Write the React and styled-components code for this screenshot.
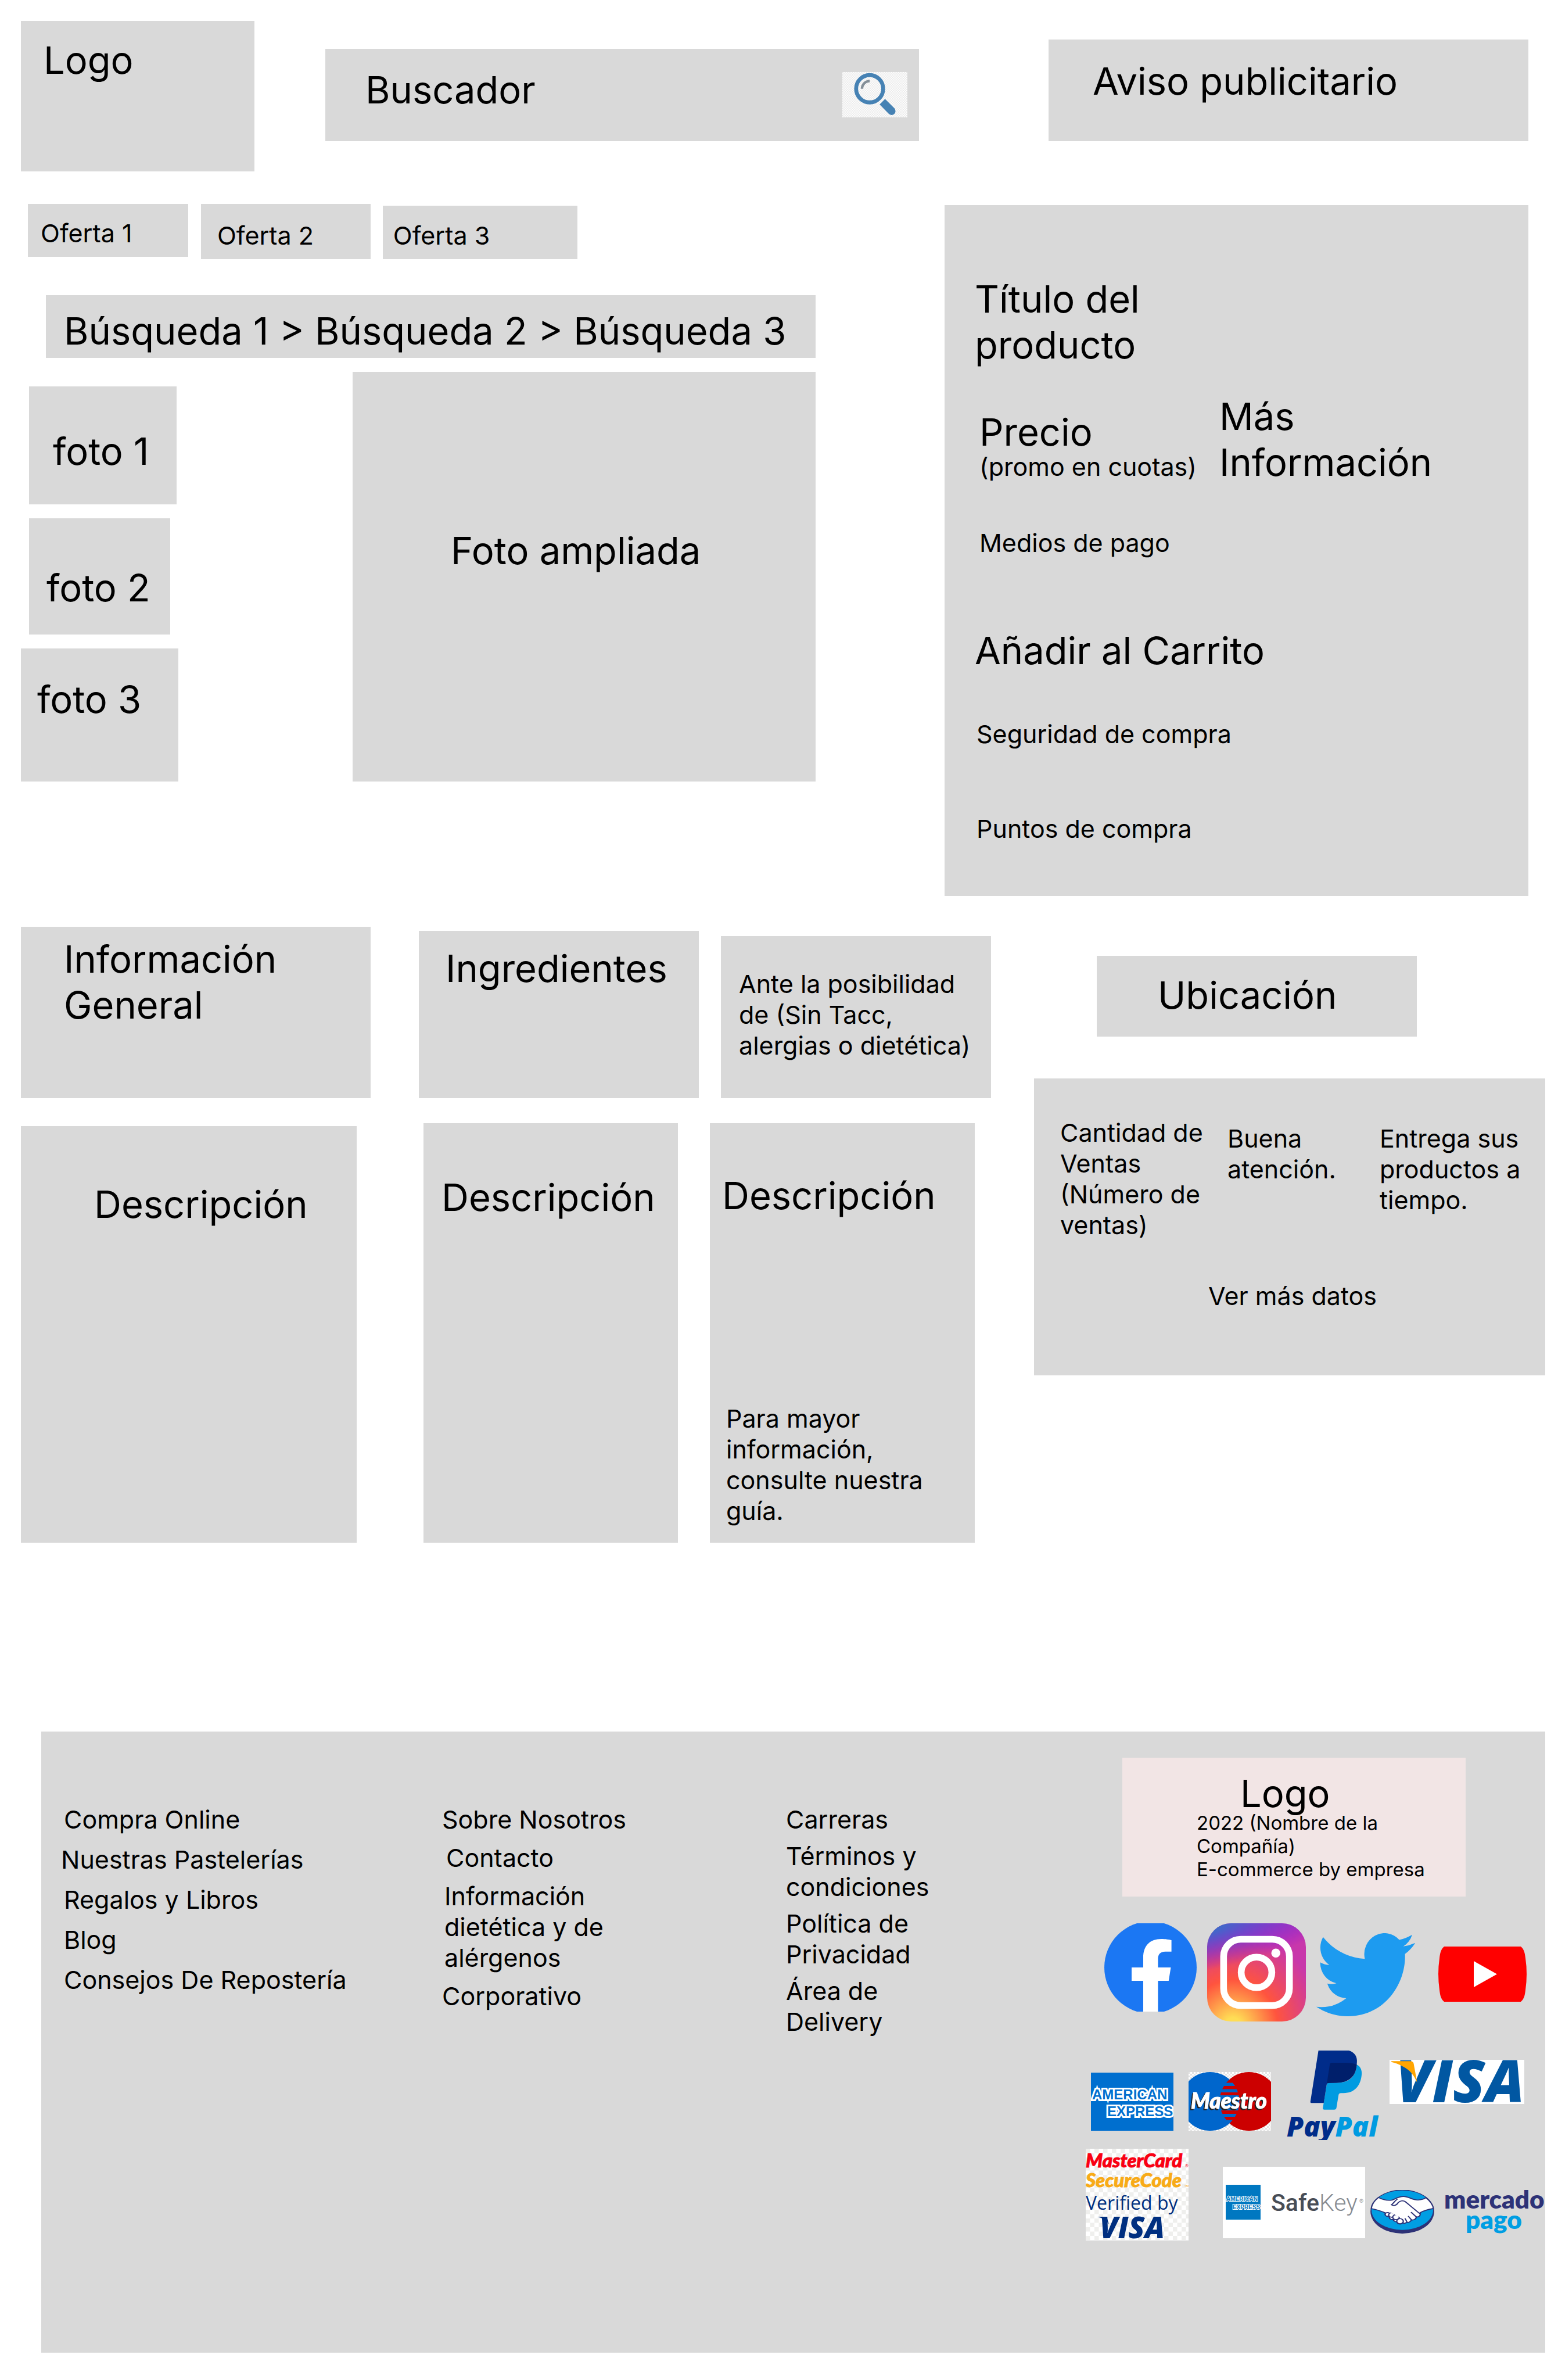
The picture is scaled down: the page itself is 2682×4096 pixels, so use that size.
import React from "react";
import styled, { createGlobalStyle } from "styled-components";

const GlobalStyle = createGlobalStyle`
  *, *::before, *::after { box-sizing: border-box; }
  body {
    margin: 0;
    background: #fff;
    color: #000;
    font-family: Inter, "Liberation Sans", sans-serif;
    font-optical-sizing: none;
  }
  h1, h2, p, ul { margin: 0; padding: 0; font-weight: 400; }
  ul { list-style: none; }
  a { color: inherit; text-decoration: none; }
  button, input { font: inherit; color: inherit; background: none; border: 0; padding: 0; margin: 0; border-radius: 0; }
  button { text-align: left; cursor: pointer; }
  svg { display: block; }
`;

/* ---------- text ---------- */

const Large = styled.p`
  font-size: 65px;
  line-height: ${(p) => p.$leading || 79}px;
`;

const Body = styled.p`
  font-size: 43px;
  line-height: 53px;
`;

const Small = styled.p`
  font-size: 33px;
  line-height: 40px;
`;

/* ---------- building blocks ---------- */

const Page = styled.div`
  padding: 36px 22px 47px 36px;
`;

const Row = styled.div`
  display: grid;
  grid-template-columns: ${(p) => p.$cols};
  align-items: ${(p) => p.$align || "start"};
`;

const Panel = styled.div`
  min-width: 0;
  min-height: ${(p) => p.$h}px;
  margin-top: ${(p) => p.$top || 0}px;
  margin-left: ${(p) => p.$gap || 0}px;
  padding: ${(p) => p.$pad || "0"};
  background: #d9d9d9;
`;

/* ---------- header ---------- */

const Header = styled(Row)`
  padding-right: 29px;
`;

const SearchForm = styled(Panel)`
  display: flex;
  align-items: flex-start;
`;

const SearchInput = styled.input`
  flex: 1;
  min-width: 0;
  height: 79px;
  margin-top: 31px;
  padding-left: 69px;
  font-size: 65px;
  line-height: 79px;
  outline: 0;
  &::placeholder { color: #000; opacity: 1; }
`;

const SearchButton = styled.button`
  width: 112px;
  height: 78px;
  margin: 40px 20px 0 0;
`;

/* ---------- product ---------- */

const Main = styled.main`
  margin-top: 56px;
`;

const ProductRow = styled(Row)`
  padding-right: 29px;
`;

const Browse = styled.div`
  min-width: 0;
`;

const Offers = styled(Row)`
  padding: 0 30% 0 12px;
`;

const Breadcrumb = styled.nav`
  margin: 62px 0 0 43px;
  min-height: 108px;
  padding: 22px 0 0 31px;
  background: #d9d9d9;
  font-size: 65px;
  line-height: 79px;
  white-space: nowrap;
`;

const Gallery = styled(Row)`
  margin-top: 24px;
`;

const Thumbs = styled.div`
  min-width: 0;
  display: flex;
  flex-direction: column;
  gap: 24px;
  padding-top: 25px;
`;

const Thumb = styled.button`
  display: flex;
  align-items: flex-start;
  min-height: ${(p) => p.$h}px;
  margin: ${(p) => p.$inset || "0"};
  padding: ${(p) => p.$pad};
  background: #d9d9d9;
  font-size: 65px;
  line-height: 79px;
  white-space: nowrap;
`;

const ProductTitle = styled.h1`
  max-width: 400px;
  font-size: 65px;
  line-height: 79px;
`;

const PriceRow = styled(Row)`
  margin-top: 44px;
  padding-left: 8px;
`;

const Price = styled.div`
  padding-top: 33px;
  white-space: nowrap;
`;

const MoreInfo = styled(Large)`
  max-width: 400px;
`;

const Payments = styled(Body)`
  margin-top: 73px;
  padding-left: 8px;
`;

const CartButton = styled.button`
  display: block;
  margin-top: 119px;
  font-size: 65px;
  line-height: 79px;
`;

const Benefit = styled(Body)`
  margin-top: ${(p) => p.$top}px;
  padding-left: 3px;
`;

/* ---------- details ---------- */

const Details = styled(Row)`
  margin-top: 53px;
`;

const Info = styled.section`
  min-width: 0;
`;

const Descriptions = styled(Row)`
  margin-top: 43px;
  padding-right: 28px;
`;

const Guide = styled(Body)`
  margin-top: 318px;
  padding-left: 7px;
  max-width: 400px;
`;

const Seller = styled.section`
  min-width: 0;
  margin-left: 74px;
  padding-top: 50px;
`;

const Location = styled.div`
  min-height: 139px;
  margin: 0 221px 0 108px;
  padding: 28px 0 0 105px;
  background: #d9d9d9;
`;

const SellerStats = styled.div`
  min-height: 511px;
  margin-top: 72px;
  padding: 67px 0 0 45px;
  background: #d9d9d9;
`;

const Stat = styled(Body)`
  padding-top: ${(p) => (p.$lower ? 10 : 0)}px;
`;

const MoreData = styled.a`
  display: block;
  margin-top: 69px;
  padding-left: 255px;
  font-size: 43px;
  line-height: 53px;
`;

/* ---------- footer ---------- */

const Footer = styled.footer`
  display: grid;
  grid-template-columns: 651fr 592fr 516fr 791fr;
  align-items: start;
  min-height: 1069px;
  margin: 325px 0 0 35px;
  padding-left: 39px;
  background: #d9d9d9;
`;

const LinkColumn = styled.ul`
  min-width: 0;
  display: flex;
  flex-direction: column;
  gap: ${(p) => p.$gap}px;
  padding-top: 125px;
  font-size: 43px;
  line-height: 53px;
`;

const LinkItem = styled.li`
  max-width: ${(p) => p.$max || "none"};
  padding-left: ${(p) => p.$indent || 0}px;
  margin-left: ${(p) => (p.$outdent ? -5 : 0)}px;
`;

const Brand = styled.div`
  min-width: 0;
  padding-top: 45px;
`;

const Company = styled.div`
  min-height: 239px;
  margin: 0 137px 0 63px;
  padding: 31px 60px 0 128px;
  background: #f2e5e5;
`;

const CompanyLogo = styled(Large)`
  padding-left: 75px;
`;

const LogoRow = styled.div`
  display: flex;
  align-items: flex-start;
  margin-top: ${(p) => p.$top}px;
  padding-left: ${(p) => p.$left || 0}px;
`;

const LogoSlot = styled.a`
  display: block;
  flex: none;
  margin: ${(p) => p.$top || 0}px 0 0 ${(p) => p.$gap || 0}px;
`;

/* ---------- drawings ---------- */

const SearchIcon = () => (
  <svg width="112" height="78" viewBox="0 0 495 342" preserveAspectRatio="none" aria-hidden="true">
    <defs>
      <pattern id="searchCheck" width="18" height="18" patternUnits="userSpaceOnUse">
        <rect width="18" height="18" fill="#fff" />
        <rect width="9" height="9" fill="#e9e9e9" />
        <rect x="9" y="9" width="9" height="9" fill="#e9e9e9" />
      </pattern>
    </defs>
    <rect width="495" height="342" fill="url(#searchCheck)" />
    <circle cx="208" cy="126" r="103" fill="none" stroke="#4682b4" strokeWidth="30" />
    <path d="M150 126A58 58 0 0 1 208 68" fill="none" stroke="#848f98" strokeWidth="19" />
    <path d="M284 244L325 203L396 273A30 30 0 0 1 353 315Z" fill="#4682b4" />
  </svg>
);

const FacebookLogo = () => (
  <svg width="159" height="152" viewBox="0 0 159 152" aria-hidden="true">
    <circle cx="79.5" cy="76" r="79.5" fill="#1b77f3" />
    <path
      fill="#fff"
      d="M67 152V99H47V76H67V59C67 38 79 27 98 27C105 27 112 28 115.6 29V48.7H105C96 48.7 92.4 54 92.4 61V76H114.5L110.8 99H92.4V152Z"
    />
  </svg>
);

const InstagramLogo = () => (
  <svg width="170" height="169" viewBox="0 0 132 132" preserveAspectRatio="none" aria-hidden="true">
    <defs>
      <radialGradient id="igWarm" gradientUnits="userSpaceOnUse" cx="158.429" cy="578.088" r="65" gradientTransform="matrix(0 -1.98198 1.8439 0 -1031.402 454.004)">
        <stop offset="0" stopColor="#fd5" />
        <stop offset=".1" stopColor="#fd5" />
        <stop offset=".5" stopColor="#ff543e" />
        <stop offset="1" stopColor="#c837ab" />
      </radialGradient>
      <radialGradient id="igCool" gradientUnits="userSpaceOnUse" cx="147.694" cy="473.455" r="65" gradientTransform="matrix(.17394 .86872 -3.5818 .71718 1648.348 -458.493)">
        <stop offset="0" stopColor="#3771c8" />
        <stop offset=".128" stopColor="#3771c8" />
        <stop offset="1" stopColor="#60f" stopOpacity="0" />
      </radialGradient>
    </defs>
    <rect width="132" height="132" rx="32" fill="url(#igWarm)" />
    <rect width="132" height="132" rx="32" fill="url(#igCool)" />
    <g fill="none" stroke="#fff" strokeWidth="9">
      <rect x="22" y="21.5" width="88" height="89" rx="23" />
      <circle cx="66" cy="66" r="20.5" />
    </g>
    <circle cx="91.8" cy="40" r="6" fill="#fff" />
  </svg>
);

const TwitterLogo = () => (
  <svg width="170" height="143" viewBox="0 2.25 24 19.5" preserveAspectRatio="none" aria-hidden="true">
    <path
      fill="#1d9bf0"
      d="M23.953 4.57a10 10 0 01-2.825.775 4.958 4.958 0 002.163-2.723c-.951.555-2.005.959-3.127 1.184a4.92 4.92 0 00-8.384 4.482C7.69 8.095 4.067 6.13 1.64 3.162a4.822 4.822 0 00-.666 2.475c0 1.71.87 3.213 2.188 4.096a4.904 4.904 0 01-2.228-.616v.06a4.923 4.923 0 003.946 4.827 4.996 4.996 0 01-2.212.085 4.936 4.936 0 004.604 3.417 9.867 9.867 0 01-6.102 2.105c-.39 0-.779-.023-1.17-.067a13.995 13.995 0 007.557 2.209c9.053 0 13.998-7.496 13.998-13.985 0-.21 0-.42-.015-.63A9.935 9.935 0 0024 4.59z"
    />
  </svg>
);

const YoutubeLogo = () => (
  <svg width="152" height="95" viewBox="0 0 152 95" aria-hidden="true">
    <path fill="#f00" d="M10 0H142C148 5 149 12 150 20Q154 47 150 75C149 83 148 90 142 95H10C4 90 3 83 2 75Q-2 47 2 20C3 12 4 5 10 0Z" />
    <path fill="#fff" d="M61 25L101 47.5L61 70Z" />
  </svg>
);

const LogoText = styled.text`
  font-family: ${(p) => p.$family || "Open Sans"}, sans-serif;
  font-size: ${(p) => p.$size}px;
  font-weight: ${(p) => p.$weight || 400};
  font-style: ${(p) => (p.$italic ? "italic" : "normal")};
  filter: ${(p) => (p.$shadow ? "drop-shadow(-2px 2px 0 #222)" : "none")};
`;

const AmexLogo = () => (
  <svg width="142" height="100" viewBox="0 0 142 100" aria-hidden="true">
    <rect width="142" height="100" fill="#006fcf" />
    <g fill="#006fcf" stroke="#fff" strokeWidth="6" paintOrder="stroke">
      <LogoText $family="Liberation Sans" $size={24} $weight={700} x="2" y="46">AMERICAN</LogoText>
      <LogoText $family="Liberation Sans" $size={24} $weight={700} x="28" y="75">EXPRESS</LogoText>
    </g>
  </svg>
);

const MaestroLogo = () => (
  <svg width="142" height="101" viewBox="0 0 142 101" aria-hidden="true">
    <defs>
      <pattern id="maestroCheck" width="6" height="6" patternUnits="userSpaceOnUse">
        <rect width="6" height="6" fill="#fff" />
        <rect width="3" height="3" fill="#e4e4e4" />
        <rect x="3" y="3" width="3" height="3" fill="#e4e4e4" />
      </pattern>
      <clipPath id="maestroBands">
        <path d="M0 13H142V18.5H0ZM0 24H142V29.5H0ZM0 35H142V40H0ZM0 66H142V72H0ZM0 77H142V82.5H0Z" />
      </clipPath>
    </defs>
    <rect width="142" height="101" fill="url(#maestroCheck)" />
    <circle cx="104" cy="50.5" r="50.5" fill="#c00" />
    <circle cx="37" cy="50.5" r="50.5" fill="#06c" />
    <circle cx="104" cy="50.5" r="50.5" fill="#c00" clipPath="url(#maestroBands)" />
    <LogoText $family="Lato" $size={37} $weight={900} $italic $shadow x="4" y="63" fill="#fff" stroke="#fff" strokeWidth="1">Maestro</LogoText>
  </svg>
);

const PaypalLogo = () => (
  <svg width="161" height="154" viewBox="0 0 161 154" aria-hidden="true">
    <svg width="161" height="154" viewBox="85 120 510 636" preserveAspectRatio="none">
      <path fill="#009be1" d="M290 540Q281 540 282 530L303 362Q305 350 316 350L370 348C430 345 462 300 467 220C485 230 495 255 494 285C490 370 455 422 395 422L380 422Q370 422 368 434L356 528Q354 540 344 540Z" />
      <path fill="#002c8a" d="M258 120L424 120C450 130 467 155 468 190C468 290 430 348 355 349L316 350Q305 350 303 362L287 493L220 493Q214 493 214 484Z" />
      <path fill="#001f6b" d="M320 218Q321 207 332 207L405 207C430 207 450 212 467 220C462 300 430 348 355 349L304 352Z" />
    </svg>
    <LogoText $size={47} $weight={800} $italic x="0" y="148" fill="#002c8a">
      Pay<tspan fill="#009be1">Pal</tspan>
    </LogoText>
  </svg>
);

const VisaLogo = () => (
  <svg width="232" height="76" viewBox="0 0 232 76" aria-hidden="true">
    <rect width="232" height="76" fill="#fff" />
    <LogoText $size={101} $weight={800} $italic x="11" y="73" fill="#0157a2">VISA</LogoText>
    <svg width="232" height="76" viewBox="0 0 736 313" preserveAspectRatio="none">
      <path fill="#ffa500" d="M10 9H112Q130 9 132 28L151 163C135 110 110 70 70 45C50 28 30 22 10 15Z" />
    </svg>
  </svg>
);

const SecureLogo = () => (
  <svg width="177" height="158" viewBox="0 0 177 158" aria-hidden="true">
    <defs>
      <pattern id="secureCheck" width="15" height="15" patternUnits="userSpaceOnUse">
        <rect width="15" height="15" fill="#fff" />
        <rect width="7.5" height="7.5" fill="#efefed" />
        <rect x="7.5" y="7.5" width="7.5" height="7.5" fill="#efefed" />
      </pattern>
    </defs>
    <rect width="177" height="158" fill="url(#secureCheck)" />
    <LogoText $family="Lato" $size={33} $weight={900} $italic x="0" y="32" fill="#f90012" stroke="#f90012" strokeWidth="1">MasterCard</LogoText>
    <LogoText $family="Lato" $size={33} $weight={900} $italic x="0" y="66" fill="#f8ab17" stroke="#f8ab17" strokeWidth="1">SecureCode</LogoText>
    <LogoText $size={7} x="171" y="32" fill="#f90012">®</LogoText>
    <LogoText $size={5} x="170" y="66" fill="#f8ab17">TM</LogoText>
    <LogoText $size={32} x="0" y="105" fill="#002f80">Verified by</LogoText>
    <LogoText $size={51} $weight={800} $italic x="24" y="154" fill="#002f80">VISA</LogoText>
    <path d="M20 117H36L40 130Q34 120 20 117Z" fill="#002f80" />
  </svg>
);

const SafeKeyLogo = () => (
  <svg width="245" height="123" viewBox="0 0 245 123" aria-hidden="true">
    <rect width="245" height="123" fill="#fff" />
    <rect x="5" y="31" width="60" height="60" fill="#0078c1" />
    <g fill="#0078c1" stroke="#fff" strokeWidth="2" paintOrder="stroke">
      <LogoText $family="Liberation Sans" $size={10} $weight={700} x="6" y="59">AMERICAN</LogoText>
      <LogoText $family="Liberation Sans" $size={10} $weight={700} x="17" y="73">EXPRESS</LogoText>
    </g>
    <LogoText $family="Roboto" $size={41} $weight={500} x="83" y="76" fill="#484d56">
      Safe<tspan fontWeight="300" fill="#878c92">Key</tspan>
    </LogoText>
    <LogoText $family="Roboto" $size={9} x="235" y="62" fill="#878c92">®</LogoText>
  </svg>
);

const MercadoPagoLogo = () => (
  <svg width="301" height="75" viewBox="0 0 301 75" aria-hidden="true">
    <svg width="110" height="75" viewBox="544 1109 349 309" preserveAspectRatio="none">
      <ellipse cx="718.5" cy="1262" rx="174" ry="156" fill="#2d3277" />
      <ellipse cx="718.5" cy="1252" rx="168" ry="140" fill="#009ee3" />
      <path
        fill="#fff"
        stroke="#2d3277"
        strokeWidth="7"
        strokeLinejoin="round"
        d="M588 1162C612 1178 640 1186 664 1180C680 1172 700 1155 725 1155C755 1155 770 1180 804 1180C825 1178 840 1170 848 1163C870 1187 886 1215 888 1240C860 1246 835 1256 815 1270C820 1290 810 1302 795 1300C795 1315 780 1325 768 1320C765 1335 750 1342 742 1338C735 1348 725 1345 720 1342C712 1355 692 1352 690 1335C678 1335 668 1325 670 1318C655 1322 645 1310 648 1297C630 1300 620 1285 627 1272C605 1260 580 1248 549 1241C551 1210 568 1182 588 1162Z"
      />
      <g fill="#fff" stroke="#2d3277" strokeWidth="7">
        <circle cx="638" cy="1282" r="13" />
        <circle cx="660" cy="1286" r="16" />
        <circle cx="684" cy="1302" r="18" />
        <circle cx="706" cy="1330" r="18" />
      </g>
      <path fill="#fff" d="M645 1262L700 1270L725 1315L680 1285Z" />
      <path
        fill="none"
        stroke="#2d3277"
        strokeWidth="7"
        strokeLinecap="round"
        d="M690 1175C675 1190 668 1205 659 1214C668 1222 685 1222 695 1200C705 1186 722 1180 735 1192L812 1275M768 1268L795 1300M752 1296L768 1320M734 1312L744 1336"
      />
    </svg>
    <LogoText $family="Lato" $size={44} $weight={800} x="127" y="32" fill="#2d3277">mercado</LogoText>
    <LogoText $family="Lato" $size={44} $weight={800} x="164" y="67" fill="#009ee3">pago</LogoText>
  </svg>
);

/* ---------- page ---------- */

export default function App() {
  return (
    <Page>
      <GlobalStyle />
      <Header as="header" $cols="402fr 1144fr 1049fr">
        <Panel $h={259} $pad="28px 0 0 39px">
          <Large>Logo</Large>
        </Panel>
        <SearchForm as="form" role="search" $h={159} $top={48} $gap={122}>
          <SearchInput type="text" name="q" aria-label="Buscador" placeholder="Buscador" />
          <SearchButton type="button" aria-label="Buscar">
            <SearchIcon />
          </SearchButton>
        </SearchForm>
        <Panel as="aside" $h={175} $top={32} $gap={223} $pad="32px 0 0 76px">
          <Large>Aviso publicitario</Large>
        </Panel>
      </Header>

      <Main>
        <ProductRow $cols="1368fr 1227fr">
          <Browse>
            <Offers as="nav" aria-label="Ofertas" $cols="276fr 314fr 356fr">
              <Panel as="a" href="#oferta-1" $h={91} $pad="24px 0 0 22px">
                <Body as="span">Oferta 1</Body>
              </Panel>
              <Panel as="a" href="#oferta-2" $h={95} $gap={22} $pad="28px 0 0 28px">
                <Body as="span">Oferta 2</Body>
              </Panel>
              <Panel as="a" href="#oferta-3" $h={92} $top={3} $gap={21} $pad="25px 0 0 18px">
                <Body as="span">Oferta 3</Body>
              </Panel>
            </Offers>
            <Breadcrumb aria-label="Ruta de búsqueda">
              <a href="#b1">Búsqueda 1</a> &gt; <a href="#b2">Búsqueda 2</a> &gt; <a href="#b3">Búsqueda 3</a>
            </Breadcrumb>
            <Gallery $cols="271fr 1097fr">
              <Thumbs>
                <Thumb type="button" $h={203} $inset="0 3px 0 14px" $pad="72px 0 0 41px">foto 1</Thumb>
                <Thumb type="button" $h={200} $inset="0 14px" $pad="80px 0 0 30px">foto 2</Thumb>
                <Thumb type="button" $h={229} $pad="48px 0 0 28px">foto 3</Thumb>
              </Thumbs>
              <Panel $h={705} $gap={300} $pad="268px 0 0 169px">
                <Large>Foto ampliada</Large>
              </Panel>
            </Gallery>
          </Browse>

          <Panel as="section" $h={1189} $top={2} $gap={222} $pad="122px 0 0 52px">
            <ProductTitle>Título del producto</ProductTitle>
            <PriceRow $cols="413fr 532fr">
              <Price>
                <Large $leading={67}>Precio</Large>
                <Body>(promo en cuotas)</Body>
              </Price>
              <MoreInfo>Más Información</MoreInfo>
            </PriceRow>
            <Payments>Medios de pago</Payments>
            <CartButton type="button">Añadir al Carrito</CartButton>
            <Benefit $top={78}>Seguridad de compra</Benefit>
            <Benefit $top={110}>Puntos de compra</Benefit>
          </Panel>
        </ProductRow>

        <Details $cols="1670fr 954fr">
          <Info>
            <Row $cols="602fr 565fr 503fr" $align="end">
              <Panel $h={295} $pad="16px 100px 0 74px">
                <Large as="h2">Información General</Large>
              </Panel>
              <Panel $h={288} $gap={83} $pad="25px 0 0 46px">
                <Large as="h2">Ingredientes</Large>
              </Panel>
              <Panel $h={279} $gap={38} $pad="56px 20px 0 31px">
                <Body>Ante la posibilidad de (Sin Tacc, alergias o dietética)</Body>
              </Panel>
            </Row>
            <Descriptions $cols="578fr 553fr 511fr">
              <Panel $h={717} $top={5} $pad="95px 0 0 126px">
                <Large>Descripción</Large>
              </Panel>
              <Panel $h={722} $gap={115} $pad="88px 0 0 31px">
                <Large>Descripción</Large>
              </Panel>
              <Panel $h={722} $gap={55} $pad="85px 0 0 21px">
                <Large>Descripción</Large>
                <Guide>Para mayor información, consulte nuestra guía.</Guide>
              </Panel>
            </Descriptions>
          </Info>

          <Seller>
            <Location>
              <Large as="h2">Ubicación</Large>
            </Location>
            <SellerStats>
              <Row $cols="288fr 262fr 285fr">
                <Stat>Cantidad de Ventas (Número de ventas)</Stat>
                <Stat $lower>Buena atención.</Stat>
                <Stat $lower>Entrega sus productos a tiempo.</Stat>
              </Row>
              <MoreData href="#datos">Ver más datos</MoreData>
            </SellerStats>
          </Seller>
        </Details>
      </Main>

      <Footer>
        <LinkColumn $gap={16}>
          <LinkItem><a href="#compra">Compra Online</a></LinkItem>
          <LinkItem $outdent><a href="#pastelerias">Nuestras Pastelerías</a></LinkItem>
          <LinkItem><a href="#regalos">Regalos y Libros</a></LinkItem>
          <LinkItem><a href="#blog">Blog</a></LinkItem>
          <LinkItem><a href="#consejos">Consejos De Repostería</a></LinkItem>
        </LinkColumn>
        <LinkColumn $gap={13}>
          <LinkItem><a href="#nosotros">Sobre Nosotros</a></LinkItem>
          <LinkItem $indent={7}><a href="#contacto">Contacto</a></LinkItem>
          <LinkItem $indent={4} $max="325px"><a href="#dietetica">Información dietética y de alérgenos</a></LinkItem>
          <LinkItem><a href="#corporativo">Corporativo</a></LinkItem>
        </LinkColumn>
        <LinkColumn $gap={10}>
          <LinkItem><a href="#carreras">Carreras</a></LinkItem>
          <LinkItem $max="300px"><a href="#terminos">Términos y condiciones</a></LinkItem>
          <LinkItem $max="300px"><a href="#privacidad">Política de Privacidad</a></LinkItem>
          <LinkItem $max="300px"><a href="#delivery">Área de Delivery</a></LinkItem>
        </LinkColumn>
        <Brand>
          <Company>
            <CompanyLogo $leading={61}>Logo</CompanyLogo>
            <Small>2022 (Nombre de la Compañía)</Small>
            <Small>E-commerce by empresa</Small>
          </Company>
          <LogoRow $top={46} $left={32}>
            <LogoSlot href="#facebook" aria-label="Facebook"><FacebookLogo /></LogoSlot>
            <LogoSlot href="#instagram" aria-label="Instagram" $gap={18}><InstagramLogo /></LogoSlot>
            <LogoSlot href="#twitter" aria-label="Twitter" $gap={18} $top={17}><TwitterLogo /></LogoSlot>
            <LogoSlot href="#youtube" aria-label="YouTube" $gap={40} $top={40}><YoutubeLogo /></LogoSlot>
          </LogoRow>
          <LogoRow $top={50} $left={9}>
            <LogoSlot as="div" $top={38}><AmexLogo /></LogoSlot>
            <LogoSlot as="div" $gap={26} $top={37}><MaestroLogo /></LogoSlot>
            <LogoSlot as="div" $gap={27}><PaypalLogo /></LogoSlot>
            <LogoSlot as="div" $gap={16} $top={16}><VisaLogo /></LogoSlot>
          </LogoRow>
          <LogoRow $top={15}>
            <LogoSlot as="div"><SecureLogo /></LogoSlot>
            <LogoSlot as="div" $gap={59} $top={31}><SafeKeyLogo /></LogoSlot>
            <LogoSlot as="div" $gap={9} $top={71}><MercadoPagoLogo /></LogoSlot>
          </LogoRow>
        </Brand>
      </Footer>
    </Page>
  );
}
